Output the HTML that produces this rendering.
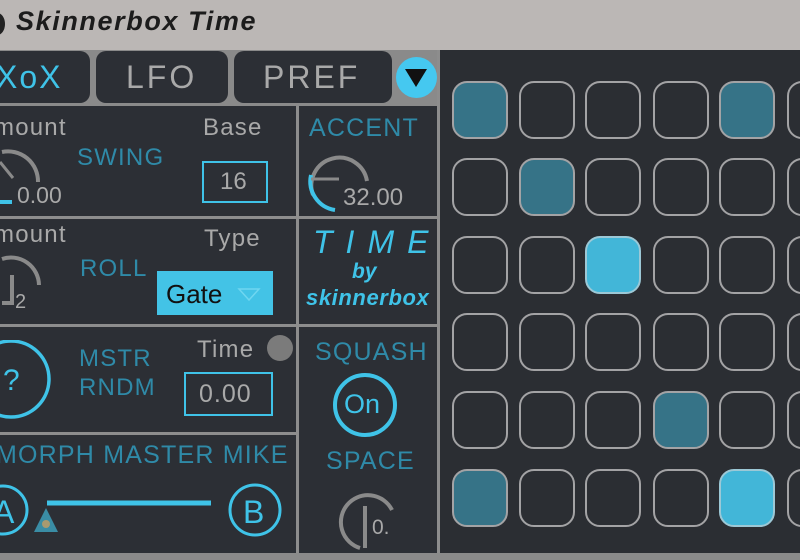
<!DOCTYPE html>
<html><head><style>
body{margin:0;width:800px;height:560px;overflow:hidden;background:#2b2e33;font-family:"Liberation Sans",sans-serif;position:relative}
.a{position:absolute;white-space:nowrap}
.g{color:#a9a9a9}
.c{color:#3fc3e8}
.d{color:#2f8aa8}
.ls{letter-spacing:1.2px}
.ln{position:absolute;background:#8d8d8d}
.cell{position:absolute;width:56px;height:58px;border:2.5px solid #a3a3a5;border-radius:15px;box-sizing:border-box}
.m{background:#367387}
.b{background:#42b6d8;border-color:#9cc8d6}
</style></head><body>
<div class="a" style="left:0;top:0;width:800px;height:50px;background:#bbb7b5"></div>
<div class="a" style="left:-10px;top:13px;width:15px;height:22px;border-radius:50%;background:#222"></div>
<div class="a" style="left:16px;top:6px;font-size:27px;font-weight:bold;font-style:italic;color:#1c1c1c;letter-spacing:1.6px">Skinnerbox Time</div>
<!-- tabs -->
<div class="a" style="left:0;top:50px;width:440px;height:56px;background:#8a8a8a"></div>
<div class="a" style="left:-12px;top:51px;width:102px;height:52px;background:#2c2f35;border-radius:10px"></div>
<div class="a" style="left:96px;top:51px;width:132px;height:52px;background:#2c2f35;border-radius:10px"></div>
<div class="a" style="left:234px;top:51px;width:158px;height:52px;background:#2c2f35;border-radius:10px"></div>
<div class="a c" style="left:-4px;top:59px;font-size:32px;letter-spacing:2px">XoX</div>
<div class="a g" style="left:126px;top:59px;font-size:32px;letter-spacing:3px">LFO</div>
<div class="a g" style="left:263px;top:59px;font-size:32px;letter-spacing:3px">PREF</div>
<div class="a" style="left:396px;top:57px;width:41px;height:41px;border-radius:50%;background:#45c8f0"></div>
<svg class="a" style="left:396px;top:57px" width="41" height="41"><path d="M9 12 L31 12 L20 30 Z" fill="#111"/></svg>
<!-- panels background -->
<div class="a" style="left:0;top:106px;width:440px;height:450px;background:#2c2f35"></div>
<div class="ln" style="left:437px;top:50px;width:3px;height:510px"></div>
<div class="ln" style="left:296px;top:106px;width:3px;height:454px"></div>
<div class="ln" style="left:0;top:216px;width:440px;height:3px"></div>
<div class="ln" style="left:0;top:324px;width:440px;height:3px"></div>
<div class="ln" style="left:0;top:432px;width:298px;height:3px"></div>
<div class="a" style="left:0;top:553px;width:800px;height:7px;background:#8a8a8a"></div>
<!-- swing -->
<div class="a g ls" style="left:-6px;top:114px;font-size:24px">mount</div>
<div class="a g ls" style="left:203px;top:114px;font-size:24px">Base</div>
<div class="a d ls" style="left:77px;top:144px;font-size:24px">SWING</div>
<div class="a" style="left:202px;top:161px;width:66px;height:42px;border:2px solid #3fc3e8;box-sizing:border-box"></div>
<div class="a g" style="left:220px;top:168px;font-size:24px">16</div>
<svg class="a" style="left:0;top:140px" width="60" height="70"><path d="M2 12 A30 30 0 0 1 38 42" fill="none" stroke="#8a8a8a" stroke-width="4"/><path d="M0 62 L12 62" stroke="#3fc3e8" stroke-width="4"/><path d="M0 22 L13 38" stroke="#8a8a8a" stroke-width="3"/></svg>
<div class="a g" style="left:17px;top:182px;font-size:23px">0.00</div>
<!-- accent -->
<div class="a d ls" style="left:309px;top:114px;font-size:25px">ACCENT</div>
<svg class="a" style="left:303px;top:143px" width="75" height="75"><path d="M10 52 A28 28 0 1 1 64 38" fill="none" stroke="#8a8a8a" stroke-width="4"/><path d="M8 32 A29 29 0 0 0 32 67" fill="none" stroke="#3fc3e8" stroke-width="4"/><path d="M8 36 L36 36" stroke="#8a8a8a" stroke-width="3"/></svg>
<div class="a g" style="left:343px;top:184px;font-size:24px">32.00</div>
<!-- roll -->
<div class="a g ls" style="left:-6px;top:221px;font-size:24px">mount</div>
<div class="a g ls" style="left:204px;top:225px;font-size:24px">Type</div>
<div class="a d ls" style="left:80px;top:255px;font-size:24px">ROLL</div>
<svg class="a" style="left:0;top:255px" width="50" height="60"><path d="M2 4 A28 28 0 0 1 39 30" fill="none" stroke="#8a8a8a" stroke-width="4"/><path d="M12 20 L12 48 L2 48" fill="none" stroke="#8a8a8a" stroke-width="4"/></svg>
<div class="a g" style="left:15px;top:291px;font-size:20px">2</div>
<div class="a" style="left:157px;top:271px;width:116px;height:44px;background:#43c3e6"></div>
<div class="a" style="left:166px;top:279px;font-size:26px;color:#111">Gate</div>
<svg class="a" style="left:237px;top:287px" width="24" height="16"><path d="M2 2 L22 2 L12 13 Z" fill="none" stroke="#6fd6f0" stroke-width="1.5"/></svg>
<!-- TIME -->
<div class="a c" style="left:313px;top:224px;font-size:32px;font-style:italic;letter-spacing:13px">TIME</div>
<div class="a c" style="left:352px;top:260px;font-size:21px;font-style:italic;font-weight:bold">by</div>
<div class="a c" style="left:306px;top:285px;font-size:22px;font-style:italic;font-weight:bold;letter-spacing:0.6px">skinnerbox</div>
<!-- mstr -->
<svg class="a" style="left:0;top:340px" width="60" height="80"><circle cx="11" cy="39" r="38" fill="none" stroke="#3fc3e8" stroke-width="3.5"/></svg>
<div class="a c" style="left:3px;top:364px;font-size:30px">?</div>
<div class="a d ls" style="left:79px;top:344px;font-size:24px;line-height:29px">MSTR<br>RNDM</div>
<div class="a g ls" style="left:197px;top:336px;font-size:24px">Time</div>
<div class="a" style="left:267px;top:335px;width:26px;height:26px;border-radius:50%;background:#7b7b7b"></div>
<div class="a" style="left:184px;top:372px;width:89px;height:44px;border:2px solid #3fc3e8;box-sizing:border-box"></div>
<div class="a g" style="left:199px;top:380px;font-size:25px;letter-spacing:1px">0.00</div>
<!-- squash -->
<div class="a d ls" style="left:315px;top:338px;font-size:25px">SQUASH</div>
<svg class="a" style="left:330px;top:372px" width="70" height="70"><circle cx="35" cy="33" r="30" fill="none" stroke="#3fc3e8" stroke-width="4"/></svg>
<div class="a c" style="left:344px;top:389px;font-size:27px">On</div>
<div class="a d ls" style="left:326px;top:447px;font-size:25px">SPACE</div>
<svg class="a" style="left:330px;top:478px" width="70" height="80"><path d="M30 70 A27 27 0 1 1 62 32" fill="none" stroke="#8a8a8a" stroke-width="4"/><path d="M35 28 L35 70" stroke="#8a8a8a" stroke-width="4"/></svg>
<div class="a g" style="left:372px;top:516px;font-size:21px">0.</div>
<!-- morph -->
<div class="a d ls" style="left:-4px;top:441px;font-size:25px">MORPH MASTER MIKE</div>
<svg class="a" style="left:0;top:480px" width="300" height="80"><circle cx="3" cy="30" r="24" fill="none" stroke="#3fc3e8" stroke-width="3"/><circle cx="255" cy="30" r="25" fill="none" stroke="#3fc3e8" stroke-width="3"/><path d="M47 23 L211 23" stroke="#3fc3e8" stroke-width="5"/><path d="M34 52 L46 28 L58 52 Z" fill="#3a8da5"/><circle cx="46" cy="44" r="4" fill="#a89a70"/></svg>
<div class="a c" style="left:-7px;top:494px;font-size:32px">A</div>
<div class="a c" style="left:243px;top:494px;font-size:32px">B</div>
<!-- grid -->
<div class="cell m" style="left:452px;top:81px"></div><div class="cell" style="left:519px;top:81px"></div><div class="cell" style="left:585px;top:81px"></div><div class="cell" style="left:653px;top:81px"></div><div class="cell m" style="left:719px;top:81px"></div><div class="cell" style="left:787px;top:81px"></div>
<div class="cell" style="left:452px;top:158px"></div><div class="cell m" style="left:519px;top:158px"></div><div class="cell" style="left:585px;top:158px"></div><div class="cell" style="left:653px;top:158px"></div><div class="cell" style="left:719px;top:158px"></div><div class="cell" style="left:787px;top:158px"></div>
<div class="cell" style="left:452px;top:236px"></div><div class="cell" style="left:519px;top:236px"></div><div class="cell b" style="left:585px;top:236px"></div><div class="cell" style="left:653px;top:236px"></div><div class="cell" style="left:719px;top:236px"></div><div class="cell" style="left:787px;top:236px"></div>
<div class="cell" style="left:452px;top:313px"></div><div class="cell" style="left:519px;top:313px"></div><div class="cell" style="left:585px;top:313px"></div><div class="cell" style="left:653px;top:313px"></div><div class="cell" style="left:719px;top:313px"></div><div class="cell" style="left:787px;top:313px"></div>
<div class="cell" style="left:452px;top:391px"></div><div class="cell" style="left:519px;top:391px"></div><div class="cell" style="left:585px;top:391px"></div><div class="cell m" style="left:653px;top:391px"></div><div class="cell" style="left:719px;top:391px"></div><div class="cell" style="left:787px;top:391px"></div>
<div class="cell m" style="left:452px;top:469px"></div><div class="cell" style="left:519px;top:469px"></div><div class="cell" style="left:585px;top:469px"></div><div class="cell" style="left:653px;top:469px"></div><div class="cell b" style="left:719px;top:469px"></div><div class="cell" style="left:787px;top:469px"></div>
</body></html>
